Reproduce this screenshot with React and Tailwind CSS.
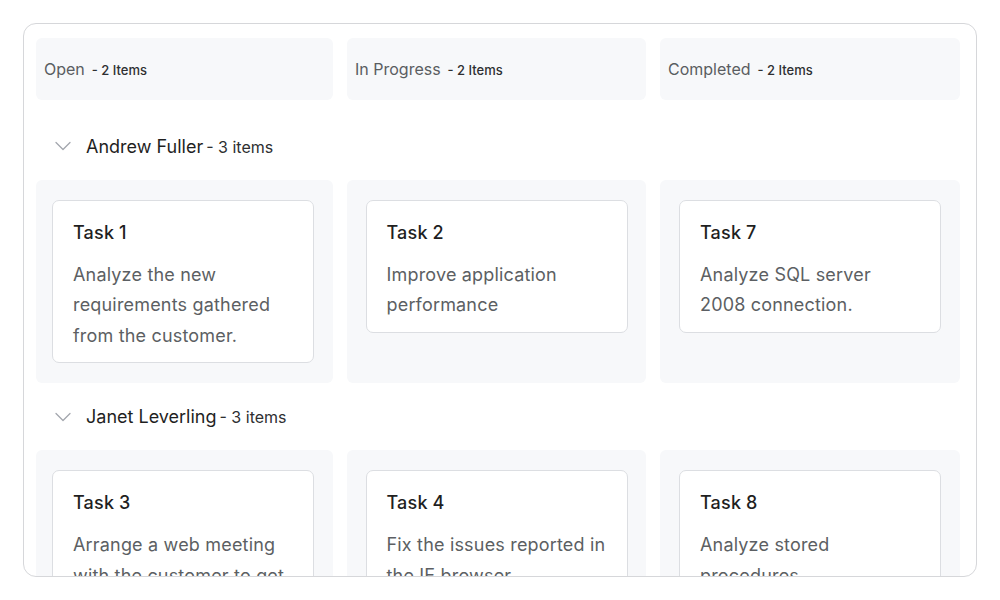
const columns = [
  { title: 'Open', count: 2 },
  { title: 'In Progress', count: 2 },
  { title: 'Completed', count: 2 },
];

const lanes = [
  {
    name: 'Andrew Fuller',
    count: 3,
    cells: [
      [{ id: 'Task 1', text: 'Analyze the new requirements gathered from the customer.' }],
      [{ id: 'Task 2', text: 'Improve application performance' }],
      [{ id: 'Task 7', text: 'Analyze SQL server 2008 connection.' }],
    ],
  },
  {
    name: 'Janet Leverling',
    count: 3,
    cells: [
      [{ id: 'Task 3', text: 'Arrange a web meeting with the customer to get new requirements.' }],
      [{ id: 'Task 4', text: 'Fix the issues reported in the IE browser.' }],
      [{ id: 'Task 8', text: 'Analyze stored procedures.' }],
    ],
  },
];

function Chevron() {
  return (
    <svg width="16" height="10" viewBox="0 0 16 10" fill="none" className="shrink-0">
      <polyline points="1,1.5 8,8.5 15,1.5" stroke="#a3a7ae" strokeWidth="1.3" strokeLinecap="round" strokeLinejoin="round" />
    </svg>
  );
}

function Card({ id, text }) {
  return (
    <div className="w-[262px] rounded-[7px] border border-[#dcdee2] bg-white px-5 pt-5 pb-[11px]">
      <p className="text-[18px] leading-6 font-medium tracking-[0.01em] text-[#1f1f1f]">{id}</p>
      <p className="mt-[15px] text-[18px] leading-[30.5px] tracking-[0.01em] text-[#5c5f63]">{text}</p>
    </div>
  );
}

export default function App() {
  return (
    <div className="h-[600px] w-[1000px] bg-white p-[23px] font-['Inter',sans-serif]">
      <div className="h-[554px] overflow-hidden rounded-[13px] border-[1.5px] border-[#d6d7da] pl-3 pt-[13.5px]">
        <div className="grid grid-cols-[297px_299px_300px] gap-[14px]">
          {columns.map((col) => (
            <div key={col.title} className="flex h-[62px] items-center rounded-md bg-[#f7f8fa] px-2">
              <p className="flex items-baseline">
                <span className="text-[16px] text-[#5a5d61]">{col.title}</span>
                <span className="ml-[7px] text-[13px] font-medium text-[#2e2f31]">- {col.count} Items</span>
              </p>
            </div>
          ))}
        </div>
        <div className="mt-[13px]">
          {lanes.map((lane) => (
            <div key={lane.name}>
              <div className="flex h-[67px] items-center pl-[19px]">
                <Chevron />
                <p className="ml-[15px] flex items-baseline">
                  <span className="text-[18px] text-[#1f1f1f]">{lane.name}</span>
                  <span className="ml-[3px] text-[16px] text-[#2e2f31]">- {lane.count} items</span>
                </p>
              </div>
              <div className="grid grid-cols-[297px_299px_300px] gap-[14px]">
                {lane.cells.map((cards, i) => (
                  <div
                    key={i}
                    className={
                      i === 0
                        ? 'flex flex-col gap-3 rounded-md bg-[#f7f8fa] pl-4 pt-5 pb-5'
                        : 'flex flex-col items-center gap-3 rounded-md bg-[#f7f8fa] pt-5 pb-5'
                    }
                  >
                    {cards.map((c) => (
                      <Card key={c.id} {...c} />
                    ))}
                  </div>
                ))}
              </div>
            </div>
          ))}
        </div>
      </div>
    </div>
  );
}
